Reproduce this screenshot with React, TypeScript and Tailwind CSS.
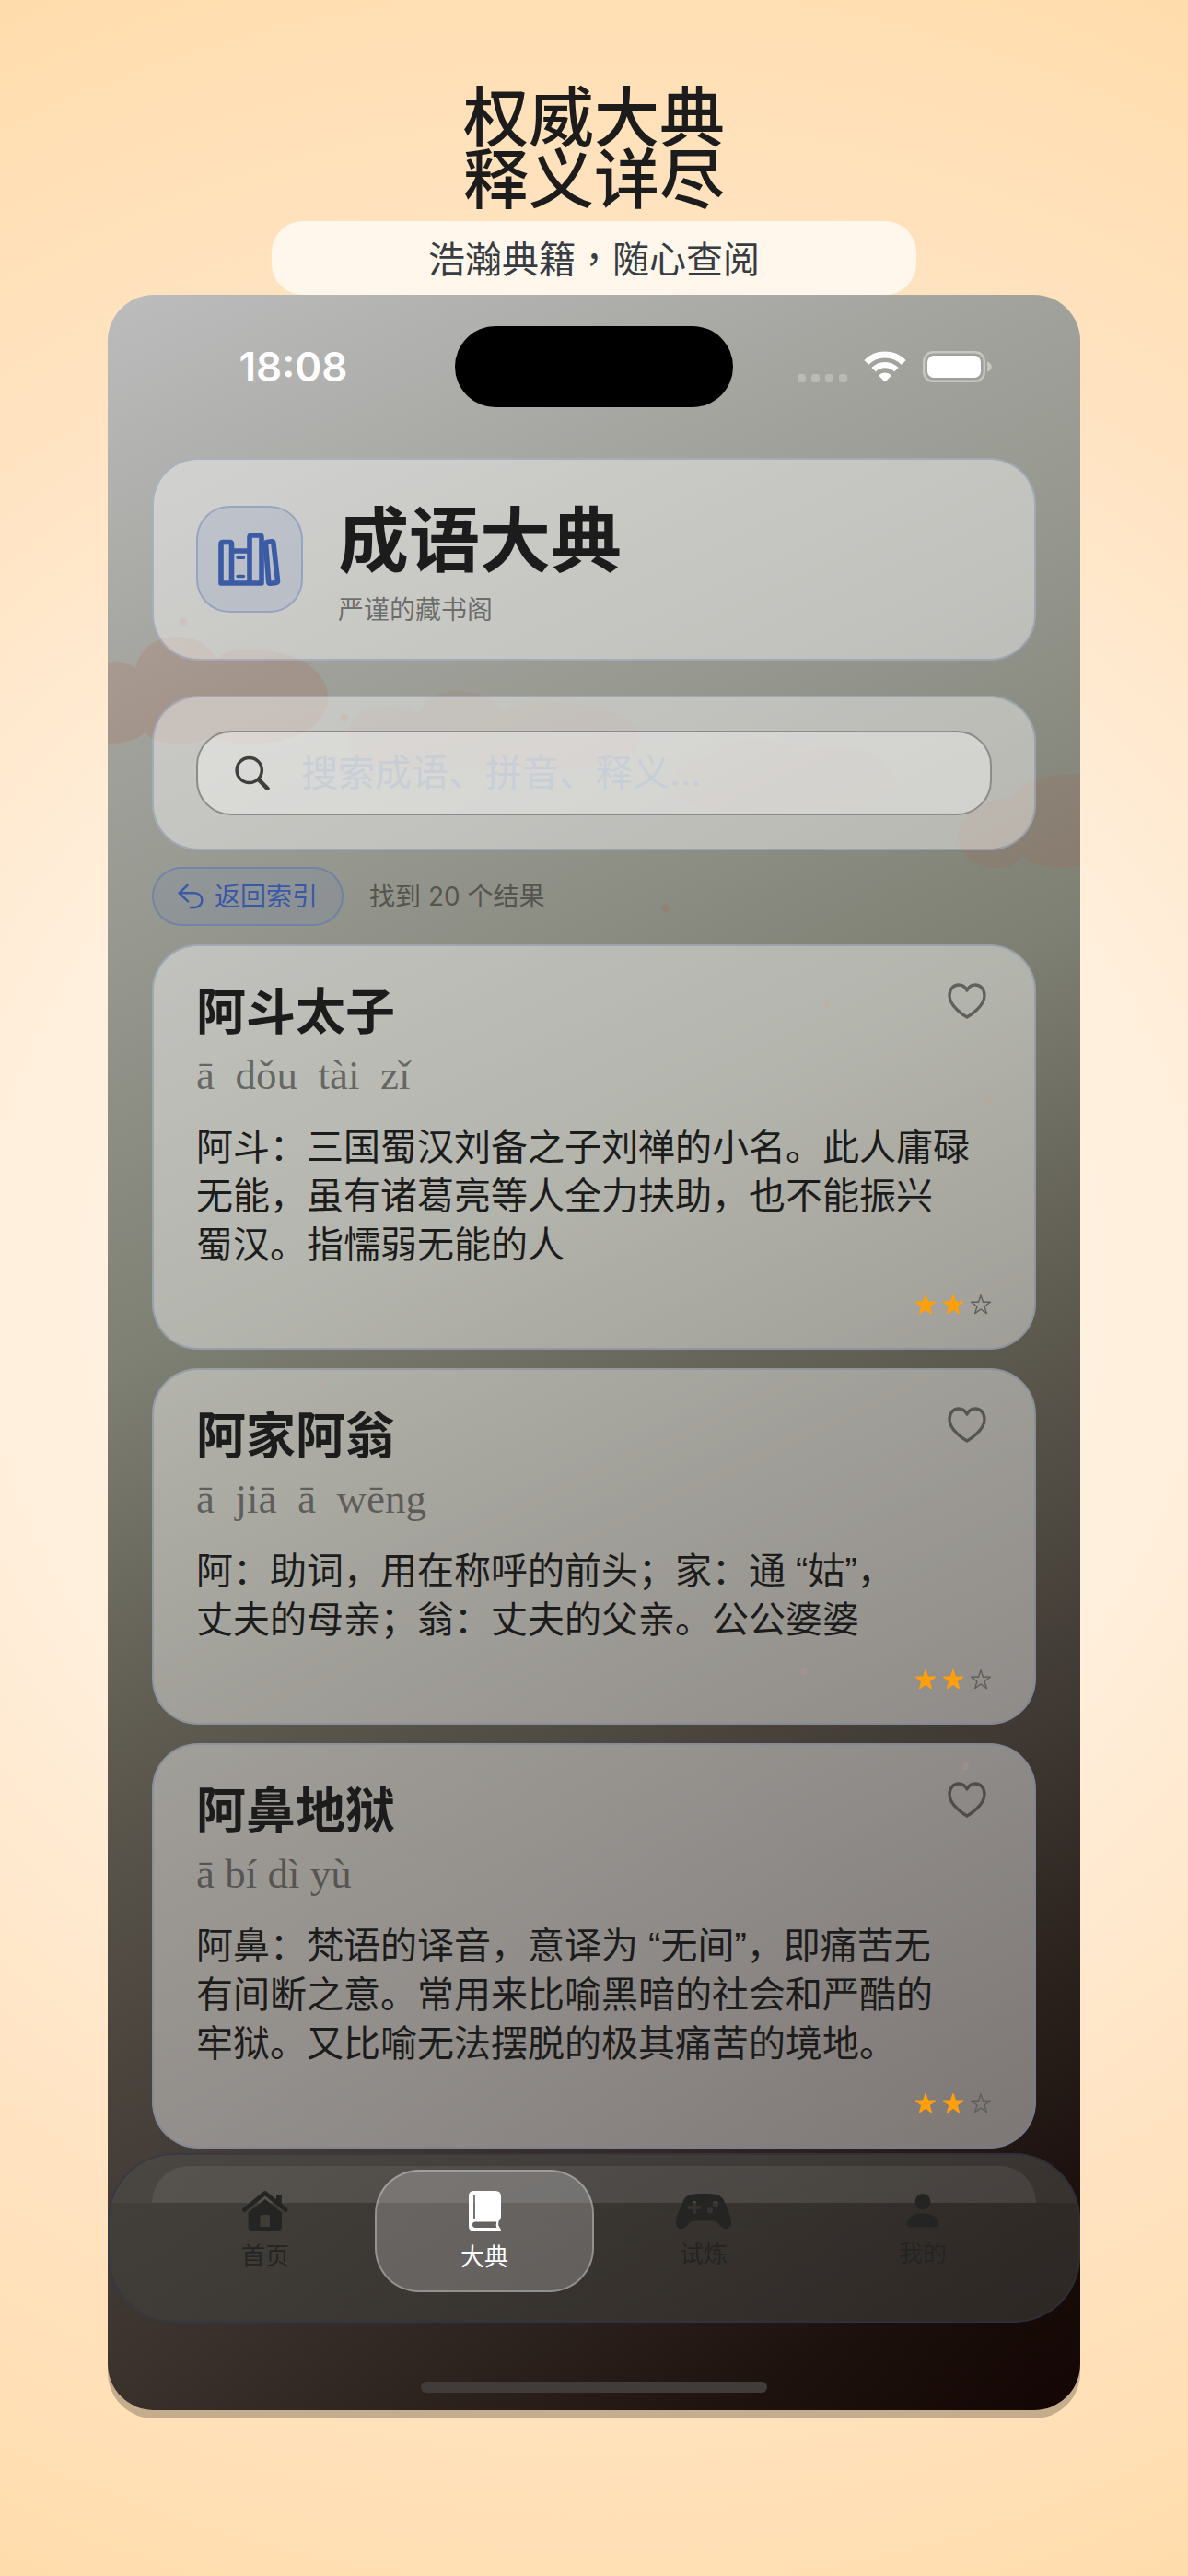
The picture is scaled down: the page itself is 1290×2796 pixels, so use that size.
import React, { useState } from 'react';

interface Idiom {
    word: string;
    pinyin: string;
    lines: string[];
    level: number;
}

const IDIOMS: Idiom[] = [
    {
        word: '阿斗太子',
        pinyin: 'ā  dǒu  tài  zǐ',
        lines: ['阿斗：三国蜀汉刘备之子刘禅的小名。此人庸碌', '无能，虽有诸葛亮等人全力扶助，也不能振兴', '蜀汉。指懦弱无能的人'],
        level: 2,
    },
    {
        word: '阿家阿翁',
        pinyin: 'ā  jiā  ā  wēng',
        lines: ['阿：助词，用在称呼的前头；家：通 “姑”，', '丈夫的母亲；翁：丈夫的父亲。公公婆婆'],
        level: 2,
    },
    {
        word: '阿鼻地狱',
        pinyin: 'ā bí dì yù',
        lines: ['阿鼻：梵语的译音，意译为 “无间”，即痛苦无', '有间断之意。常用来比喻黑暗的社会和严酷的', '牢狱。又比喻无法摆脱的极其痛苦的境地。'],
        level: 2,
    },
];

const WifiIcon = () => (
    <svg width="46" height="34" viewBox="0 0 46 34" fill="none">
        <path d="M2.800 12.400a28.500 28.500 0 0 1 40.400 0" stroke="#fff" strokeWidth="7" />
        <path d="M10.700 20.300a17.300 17.300 0 0 1 24.600 0" stroke="#fff" strokeWidth="6.400" />
        <path d="M16 26.400a10 10 0 0 1 14 0l-6.300 6.500a1 1 0 0 1-1.400 0z" fill="#fff" />
    </svg>
);

const BatteryIcon = () => (
    <svg width="75" height="34" viewBox="0 0 75 34" fill="none">
        <rect x="1.200" y="1.200" width="65.600" height="31.600" rx="10" stroke="#fff" strokeOpacity=".4" strokeWidth="2.400" />
        <rect x="5" y="5" width="58" height="24" rx="7" fill="#fff" />
        <path d="M70 11.500c3 1 4.800 3 4.800 5.500s-1.800 4.500-4.800 5.500z" fill="#fff" fillOpacity=".4" />
    </svg>
);

const LibraryIcon = () => (
    <svg width="68" height="58" viewBox="0 0 68 58" fill="none" stroke="currentColor" strokeWidth="5.600" strokeLinecap="round" strokeLinejoin="round">
        <path d="M3 55V12.500q0-2 2-2h7.500q2 0 2 2V55zM14.500 20H34v35H14.500zM34 55V5q0-2 2-2h9q2 0 2 2v50z" />
        <path d="M51.500 12.500q-.200-1.800 1.600-2l4.800-.600q1.800-.200 2 1.600l4.600 40.800q.200 2-1.800 2.200l-5.800.700q-2 .200-2.200-1.800z" />
        <path d="M21 27.300h6.500M21 47.500h6.500" strokeWidth="3.400" />
    </svg>
);

const SearchIcon = () => (
    <svg width="38" height="38" viewBox="0 0 38 38" fill="none" stroke="#3f3f3d" strokeLinecap="round">
        <circle cx="15.700" cy="16" r="13.600" strokeWidth="3.500" />
        <path d="M25.800 26.200l9.600 9.600" strokeWidth="4.600" />
    </svg>
);

const BackIcon = () => (
    <svg width="28" height="28" viewBox="0 0 28 28" fill="none" stroke="currentColor" strokeWidth="2.400" strokeLinecap="round" strokeLinejoin="round">
        <path d="M10.500 1.800L1.600 10.300l9.500 9M1.600 10.300h16.900a7.850 7.850 0 0 1 0 15.700H14" />
    </svg>
);

const HeartIcon = ({ filled }: { filled: boolean }) => (
    <svg width="42" height="39" viewBox="0 0 42 39" fill={filled ? 'currentColor' : 'none'} stroke="currentColor" strokeWidth="3.300" strokeLinejoin="round">
        <path d="M21 37C18.500 35.700 2 25.500 2 13.500 2 6.500 6.300 2 12 2c4 0 7.200 2.300 9 6 1.800-3.700 5-6 9-6 5.700 0 10 4.500 10 11.500C40 25.500 23.500 35.700 21 37z" />
    </svg>
);

const STAR = 'M12 1.800l2.500 7.500h7.900l-6.400 4.700 2.400 7.600L12 17l-6.400 4.600L8 14 1.600 9.300h7.900z';

const Star = ({ on }: { on: boolean }) => (
    <svg width="24" height="24" viewBox="0 0 24 24" fill={on ? '#ff9f0a' : 'none'} stroke={on ? '#ff9f0a' : '#5f5e5b'} strokeWidth="1.400" strokeLinejoin="round">
        <path d={STAR} />
    </svg>
);

const HomeTabIcon = () => (
    <svg width="50" height="43" viewBox="0 0 50 43" fill="currentColor">
        <path d="M2.400 20.500L24.800 2.400l22.400 18.100" fill="none" stroke="currentColor" strokeWidth="4.600" strokeLinecap="round" strokeLinejoin="round" />
        <path d="M37 5.500q0-1.500 1.500-1.500h2.800q1.500 0 1.500 1.500V17L37 12z" />
        <path fillRule="evenodd" d="M24.800 9L43 23.600V39q0 4-4 4H10.600q-4 0-4-4V23.600zM21 26q-1.500 0-1.500 1.500V39H30V27.500q0-1.500-1.500-1.500z" />
    </svg>
);

const BookTabIcon = () => (
    <svg width="35" height="44" viewBox="0 0 35 44" fill="currentColor">
        <path fillRule="evenodd" d="M5.500 0H29q6 0 6 6v22q0 3-2.200 4.200-1.600 4.300.600 7.300Q35 41 35 43q0 1-1.500 1H6q-6 0-6-6V5.500Q0 0 5.500 0zM6 4q-.900 0-.900.900v24.300q0 .900.900.900t.900-.900V4.900Q6.900 4 6 4zM7.500 33.500Q4 33.500 4 36.800T7.500 40h22.800q-1.200-3 0-6.500z" />
    </svg>
);

const GameTabIcon = () => (
    <svg width="60" height="38" viewBox="0 0 60 38" fill="currentColor">
        <path
            fillRule="evenodd"
            d="M15 1.500C19 .3 22 0 30 0s11 .3 15 1.500c4 1.200 6 3.500 7.500 7C56 16.500 60 26 60 31.500c0 4-2 6.500-5.500 6.500-3.300 0-5.200-1.800-7.500-4.500-2.500-3-3.500-4-6-4H19c-2.500 0-3.500 1-6 4C10.700 36.200 8.800 38 5.500 38 2 38 0 35.500 0 31.500 0 26 4 16.500 7.500 8.500c1.500-3.500 3.500-5.800 7.500-7zM18.200 8v5.200H13v3.600h5.200V22h3.600v-5.200H27v-3.600h-5.200V8zM43 8.300a3.200 3.200 0 1 0 0 6.400 3.200 3.200 0 0 0 0-6.400zM37 15a3.200 3.200 0 1 0 0 6.400 3.200 3.200 0 0 0 0-6.400z"
        />
    </svg>
);

const MeTabIcon = () => (
    <svg width="36" height="37" viewBox="0 0 36 37" fill="currentColor">
        <ellipse cx="18" cy="8.800" rx="8.500" ry="8.800" />
        <path d="M1 32.500C1 26 8 21.500 18 21.500S35 26 35 32.500q0 4-4 4H5q-4 0-4-4z" />
    </svg>
);

const TABS = [
    { name: '首页', Icon: HomeTabIcon },
    { name: '大典', Icon: BookTabIcon },
    { name: '试炼', Icon: GameTabIcon },
    { name: '我的', Icon: MeTabIcon },
];

const Clouds = () => (
    <svg className="absolute top-0 left-0 w-full" viewBox="0 0 1056 2296" fill="#b4573f">
        <path
            opacity=".17"
            d="M0 400c14-2 24 0 30 5 6-22 22-34 46-34 20 0 34 10 42 24 8-8 22-10 38-10 48 0 83 22 83 52s-34 50-83 50c-20 0-34-2-44-8-10 6-22 8-36 8-18 0-28-4-36-12-8 8-20 12-40 12z"
        />
        <g opacity=".08">
            <path d="M260 480c0-22 22-34 46-34 14 0 24 4 32 8 4-14 22-24 42-24 22 0 42 10 50 24 10-8 26-12 48-12 58 0 100 18 100 40s-50 34-100 34H310c-30 0-50-14-50-36z" />
            <path d="M614 530c0-16 20-28 44-28 8-12 24-20 44-20 20 0 38 6 48 14 12-5 22-6 36-6 42 0 66 16 66 36s-30 34-66 34H670c-36 0-56-12-56-30z" />
        </g>
        <path opacity=".13" d="M923 588c0-22 26-40 60-42 8-18 32-26 73-26v100c-30 4-54 0-62-12-6 10-16 14-28 14-24 0-43-14-43-34z" />
        <g opacity=".2">
            <circle cx="606" cy="666" r="4" />
            <circle cx="82" cy="355" r="4" />
            <circle cx="257" cy="459" r="4" />
            <circle cx="781" cy="769" r="4" />
            <circle cx="956" cy="873" r="4" />
            <circle cx="232" cy="1183" r="4" />
            <circle cx="756" cy="1494" r="4" />
            <circle cx="931" cy="1597" r="4" />
        </g>
    </svg>
);

const StatusBar = () => (
    <div className="grid grid-cols-[1fr_302px_1fr] items-center px-[26px] pt-[34px]">
        <div className="px-[24px] text-center font-['Inter',sans-serif] text-[44px] leading-[48px] font-semibold text-white">18:08</div>
        <div className="h-[88px] rounded-full bg-black" />
        <div className="flex items-end justify-center gap-[18px]">
            <div className="flex gap-[6px]">
                {[0, 1, 2, 3].map(i => (
                    <span key={i} className="size-[9px] rounded-[3px] bg-white/25" />
                ))}
            </div>
            <WifiIcon />
            <BatteryIcon />
        </div>
    </div>
);

const IdiomCard: React.FC<{ idiom: Idiom }> = ({ idiom }) => {
    const [liked, setLiked] = useState(false);

    return (
        <article className="rounded-[50px] border-2 border-[#6f7fa8]/40 bg-white/42 px-[46px] pt-[38px] pb-[35px]">
            <div className="flex items-start justify-between">
                <h2 className="text-[54px] leading-[68px] font-bold">{idiom.word}</h2>
                <button type="button" aria-label="收藏" onClick={() => setLiked(!liked)} className="mr-[6px] pt-[2px] text-[#1c1c1c]/55">
                    <HeartIcon filled={liked} />
                </button>
            </div>
            <p className="mt-[10px] font-['Liberation_Serif',serif] text-[45px] leading-[48px] whitespace-pre text-[#1c1c1c]/55">{idiom.pinyin}</p>
            <p className="mt-[28px] font-['Liberation_Sans','Noto_Sans_CJK_SC',sans-serif] text-[40px] leading-[53px] whitespace-nowrap">
                {idiom.lines.map(line => (
                    <span key={line} className="block">{line}</span>
                ))}
            </p>
            <div className="mt-[26px] flex justify-end gap-[6px]">
                {[1, 2, 3].map(n => (
                    <Star key={n} on={n <= idiom.level} />
                ))}
            </div>
        </article>
    );
};

const TabBar = () => {
    const [active, setActive] = useState('大典');

    return (
        <nav className="relative mt-[5px] h-[184px] overflow-hidden rounded-[72px] border-2 border-[#2e3450]/50 bg-[#42423e]/55 px-[50px] pt-[16px]">
            {/* next card sliding under the bar */}
            <div className="absolute inset-x-0 top-0 h-[52px] bg-white/4" />
            <div className="absolute inset-x-[46px] top-[12px] h-[40px] rounded-t-[40px] bg-white/7" />
            <div className="relative flex">
                {TABS.map(({ name, Icon }) => (
                    <button
                        key={name}
                        type="button"
                        onClick={() => setActive(name)}
                        className={`
                            flex h-[133px] flex-1 flex-col items-center justify-center gap-[12px] rounded-[48px] border-2 text-[26px] leading-[32px]
                            ${name === active ? 'border-white/30 bg-white/22 text-white' : 'border-transparent text-[#242422]'}
                        `}
                    >
                        <Icon />
                        {name}
                    </button>
                ))}
            </div>
        </nav>
    );
};

const App: React.FC = () => {
    const [query, setQuery] = useState('');

    return (
        <main className="min-h-screen bg-[radial-gradient(circle_farthest-corner_at_50%_50%,#fff8ee_0%,#ffefdc_42%,#ffe3c1_72%,#ffdfb4_90%,#ffdcab_100%)] px-[117px] pt-[94px] pb-[180px] font-['Inter','Noto_Sans_CJK_SC',sans-serif] text-[#1c1c1c]">
            <header className="text-center">
                <h1 className="text-[71px] leading-[67px] font-medium">
                    <span className="block">权威大典</span>
                    <span className="block">释义详尽</span>
                </h1>
                <p className="mx-auto mt-[12px] max-w-[700px] rounded-[34px] bg-[#fff7ec] pb-[2px] font-['Noto_Sans_CJK_TC',sans-serif] text-[40px] leading-[78px] text-[#373c43]">浩瀚典籍，随心查阅</p>
            </header>

            <section className="relative overflow-hidden rounded-[50px] bg-[radial-gradient(circle_at_0%_100%,rgba(110,100,90,0.22)_0%,transparent_40%),linear-gradient(155deg,#bcbcbd_0%,#a0a19a_18%,#96978f_26%,#7e8073_42%,#5f5c51_56%,#3e3732_73%,#2a211d_83%,#190d0a_93%,#130604_100%)] shadow-[0_9px_0_rgba(0,0,0,0.23)]">
                <Clouds />
                <div className="relative">
                    <StatusBar />

                    <div className="mt-[55px] px-[48px]">
                        <header className="flex items-center gap-[38px] rounded-[50px] border-2 border-[#6f7fa8]/40 bg-white/42 px-[46px] py-[33px]">
                            <div className="grid size-[116px] place-items-center rounded-[36px] border-2 border-[#4f6fb5]/35 bg-[#5b79c4]/15 text-[#3b5ba5]">
                                <LibraryIcon />
                            </div>
                            <div>
                                <h2 className="text-[77px] leading-[110px] font-bold">成语大典</h2>
                                <p className="text-[28px] leading-[40px] text-[#1c1c1c]/55">严谨的藏书阁</p>
                            </div>
                        </header>

                        <div className="mt-[38px] rounded-[50px] border-2 border-[#6f7fa8]/40 bg-white/42 px-[46px] py-[36px]">
                            <label className="flex h-[92px] items-center gap-[34px] rounded-[38px] border-2 border-[#8d8c8a] bg-white/35 px-[40px]">
                                <SearchIcon />
                                <input
                                    type="text"
                                    aria-label="搜索"
                                    value={query}
                                    onChange={e => setQuery(e.target.value)}
                                    placeholder="搜索成语、拼音、释义..."
                                    className="min-w-0 flex-1 text-[40px] leading-[52px] outline-none placeholder:text-[#c8ced6]"
                                />
                            </label>
                        </div>

                        <div className="mt-[18px] flex items-center gap-[28px] text-[28px] leading-[40px]">
                            <button type="button" className="flex h-[64px] items-center gap-[12px] rounded-full border-2 border-[#4f6fb5]/45 bg-[#5b79c4]/12 px-[26px] text-[#3a58a8]">
                                <BackIcon />
                                返回索引
                            </button>
                            <span className="text-[#55554f]">找到 20 个结果</span>
                        </div>

                        <div className="mt-[20px] flex flex-col gap-[20px]">
                            {IDIOMS.map(idiom => (
                                <IdiomCard key={idiom.word} idiom={idiom} />
                            ))}
                        </div>
                    </div>

                    <TabBar />
                    <div className="mx-auto mt-[64px] mb-[19px] h-[12px] w-[376px] rounded-full bg-[#413c3a]" />
                </div>
            </section>
        </main>
    );
};

export default App;
